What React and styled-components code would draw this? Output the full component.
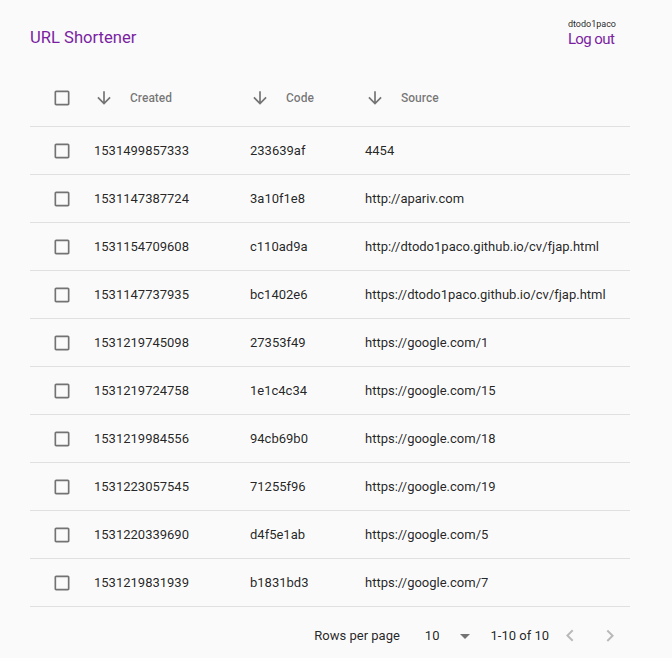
import React from "react";
import styled, { createGlobalStyle } from "styled-components";

const Global = createGlobalStyle`
  html, body { margin: 0; padding: 0; background: #fafafa; }
  body { font-family: Roboto, "Noto Sans", Arial, sans-serif; -webkit-font-smoothing: antialiased; }
  * { box-sizing: border-box; }
`;

const Page = styled.div`
  width: 672px;
  min-height: 658px;
  background: #fafafa;
`;

const Header = styled.header`
  display: flex;
  justify-content: space-between;
  align-items: flex-start;
  height: 70px;
  padding: 18px 56px 0 30px;
`;

const Title = styled.h1`
  margin: 10px 0 0;
  font-size: 16.6px;
  line-height: 20px;
  font-weight: 400;
  color: #7b1fa2;
`;

const UserBox = styled.div`
  display: flex;
  flex-direction: column;
  align-items: flex-start;
`;

const UserName = styled.span`
  font-size: 9px;
  line-height: 12px;
  color: rgba(0, 0, 0, 0.87);
`;

const LogOut = styled.a`
  font-size: 15px;
  line-height: 18px;
  letter-spacing: -0.6px;
  color: #7b1fa2;
  cursor: pointer;
  text-decoration: none;
`;

const Table = styled.div`
  width: 600px;
  margin-left: 30px;
`;

const Row = styled.div`
  display: grid;
  grid-template-columns: 64px 156px 115px 1fr;
  align-items: center;
  height: ${(p) => (p.$head ? 57 : 48)}px;
  border-bottom: 1px solid #e0e0e0;
`;

const CheckCell = styled.div`
  display: flex;
  align-items: center;
  padding-left: 22px;
`;

const Cell = styled.div`
  font-size: 13px;
  color: rgba(0, 0, 0, 0.87);
  white-space: nowrap;
`;

const HeadCell = styled.div`
  display: flex;
  align-items: center;
  gap: 16px;
  font-size: 12px;
  font-weight: 500;
  color: rgba(0, 0, 0, 0.54);
`;

const Icon = styled.svg`
  width: ${(p) => p.$size || 20}px;
  height: ${(p) => p.$size || 20}px;
  fill: ${(p) => p.$color || "rgba(0, 0, 0, 0.54)"};
  flex-shrink: 0;
  display: block;
`;

const Footer = styled.div`
  display: flex;
  align-items: center;
  justify-content: flex-end;
  height: 56px;
  padding-top: 1px;
`;

const Caption = styled.span`
  font-size: 13px;
  color: rgba(0, 0, 0, 0.87);
  margin-left: ${(p) => p.$ml || 0}px;
  margin-right: ${(p) => p.$mr || 0}px;
`;

const Select = styled.div`
  display: flex;
  align-items: center;
  margin-left: 25px;
  font-size: 13px;
  color: rgba(0, 0, 0, 0.87);
`;

const SelectArrow = styled(Icon)`
  margin-left: 14px;
`;

const PageButton = styled.button`
  width: 40px;
  height: 40px;
  border: 0;
  background: transparent;
  padding: 0;
  display: flex;
  align-items: center;
  justify-content: center;
`;

const CheckboxIcon = () => (
  <Icon viewBox="0 0 24 24">
    <path d="M19 5v14H5V5h14m0-2H5c-1.11 0-2 .9-2 2v14c0 1.1.89 2 2 2h14c1.1 0 2-.9 2-2V5c0-1.1-.89-2-2-2z" />
  </Icon>
);

const ArrowDown = () => (
  <Icon viewBox="0 0 24 24">
    <path d="M20 12l-1.41-1.41L13 16.17V4h-2v12.17l-5.58-5.59L4 12l8 8 8-8z" />
  </Icon>
);

const rows = [
  ["1531499857333", "233639af", "4454"],
  ["1531147387724", "3a10f1e8", "http://apariv.com"],
  ["1531154709608", "c110ad9a", "http://dtodo1paco.github.io/cv/fjap.html"],
  ["1531147737935", "bc1402e6", "https://dtodo1paco.github.io/cv/fjap.html"],
  ["1531219745098", "27353f49", "https://google.com/1"],
  ["1531219724758", "1e1c4c34", "https://google.com/15"],
  ["1531219984556", "94cb69b0", "https://google.com/18"],
  ["1531223057545", "71255f96", "https://google.com/19"],
  ["1531220339690", "d4f5e1ab", "https://google.com/5"],
  ["1531219831939", "b1831bd3", "https://google.com/7"],
];

export default function App() {
  return (
    <Page>
      <Global />
      <Header>
        <Title>URL Shortener</Title>
        <UserBox>
          <UserName>dtodo1paco</UserName>
          <LogOut>Log out</LogOut>
        </UserBox>
      </Header>
      <Table>
        <Row $head>
          <CheckCell><CheckboxIcon /></CheckCell>
          <HeadCell><ArrowDown />Created</HeadCell>
          <HeadCell><ArrowDown />Code</HeadCell>
          <HeadCell><ArrowDown />Source</HeadCell>
        </Row>
        {rows.map((r) => (
          <Row key={r[0]}>
            <CheckCell><CheckboxIcon /></CheckCell>
            <Cell>{r[0]}</Cell>
            <Cell>{r[1]}</Cell>
            <Cell>{r[2]}</Cell>
          </Row>
        ))}
        <Footer>
          <Caption>Rows per page</Caption>
          <Select>
            <span>10</span>
            <SelectArrow viewBox="0 0 24 24" $size={24}>
              <path d="M7 10l5 5 5-5z" />
            </SelectArrow>
          </Select>
          <Caption $ml={13} $mr={1}>1-10 of 10</Caption>
          <PageButton>
            <Icon viewBox="0 0 24 24" $size={24} $color="rgba(0,0,0,0.26)">
              <path d="M15.41 16.09l-4.58-4.59 4.58-4.59L14 5.5l-6 6 6 6z" />
            </Icon>
          </PageButton>
          <PageButton>
            <Icon viewBox="0 0 24 24" $size={24} $color="rgba(0,0,0,0.26)">
              <path d="M8.59 16.34l4.58-4.59-4.58-4.59L10 5.75l6 6-6 6z" />
            </Icon>
          </PageButton>
        </Footer>
      </Table>
    </Page>
  );
}
